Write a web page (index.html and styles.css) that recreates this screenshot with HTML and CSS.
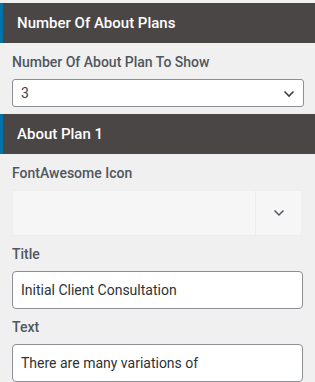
FILE: index.html
```html
<!DOCTYPE html>
<html lang="en">
<head>
  <meta charset="UTF-8" />
  <title>About Plans</title>
  <link rel="stylesheet" href="styles.css">
</head>
<body>

  <div class="section-head">Number Of About Plans</div>
  <div class="section-body">
    <label class="field-label" for="plan-count">Number Of About Plan To Show</label>
    <div class="select-box">
      <span id="plan-count">3</span>
      <svg class="chev" width="12" height="8" viewBox="0 0 12 8"><path d="M1.5 1.5 L6 6 L10.5 1.5" fill="none" stroke="#3c434a" stroke-width="1.6"/></svg>
    </div>
  </div>

  <div class="section-head">About Plan 1</div>
  <div class="section-body">
    <label class="field-label">FontAwesome Icon</label>
    <div class="icon-picker">
      <div class="icon-preview"></div>
      <div class="icon-toggle">
        <svg width="12" height="8" viewBox="0 0 12 8"><path d="M1.5 1.5 L6 6 L10.5 1.5" fill="none" stroke="#50575e" stroke-width="1.5"/></svg>
      </div>
    </div>

    <label class="field-label" for="title">Title</label>
    <input class="text-input" type="text" id="title" value="Initial Client Consultation" />

    <label class="field-label" for="text">Text</label>
    <input class="text-input" type="text" id="text" value="There are many variations of" />
  </div>

</body>
</html>
```

FILE: styles.css
```css
body {
  margin: 0;
  padding-top: 3px;
  background-color: #f0f0f1;
  font-family: Roboto, 'Liberation Sans', sans-serif;
  color: #3c434a;
}
.section-head {
  height: 40px;
  line-height: 40px;
  background-color: #4a4645;
  border-left: 3px solid #0073aa;
  padding-left: 14px;
  color: #fff;
  font-size: 15px;
  font-weight: 500;
}
.section-body {
  padding: 9px 11px 7px 12px;
}
.field-label {
  display: block;
  font-size: 14px;
  font-weight: 500;
  color: #50575e;
  line-height: 20px;
  margin-bottom: 7px;
}
.select-box {
  height: 26px;
  background-color: #fff;
  border: 1px solid #8c8f94;
  border-radius: 3px;
  display: flex;
  align-items: center;
  justify-content: space-between;
  padding: 0 8px;
  font-size: 14px;
}
.chev {
  margin-top: 2px;
}
.icon-picker {
  height: 46px;
  width: 290px;
  display: flex;
  background-color: #f6f6f6;
  border: 1px solid #ededed;
  box-sizing: border-box;
  margin-bottom: 8px;
}
.icon-preview {
  flex: 1;
  border-right: 1px solid #ececec;
}
.icon-toggle {
  width: 45px;
  display: flex;
  align-items: center;
  justify-content: center;
}
.text-input {
  display: block;
  box-sizing: border-box;
  width: 291px;
  height: 38px;
  margin: 0 0 8px 0;
  padding: 0 8px;
  border: 1px solid #8c8f94;
  border-radius: 4px;
  background-color: #fff;
  font-family: Roboto, 'Liberation Sans', sans-serif;
  font-size: 14px;
  color: #2c3338;
}
```
